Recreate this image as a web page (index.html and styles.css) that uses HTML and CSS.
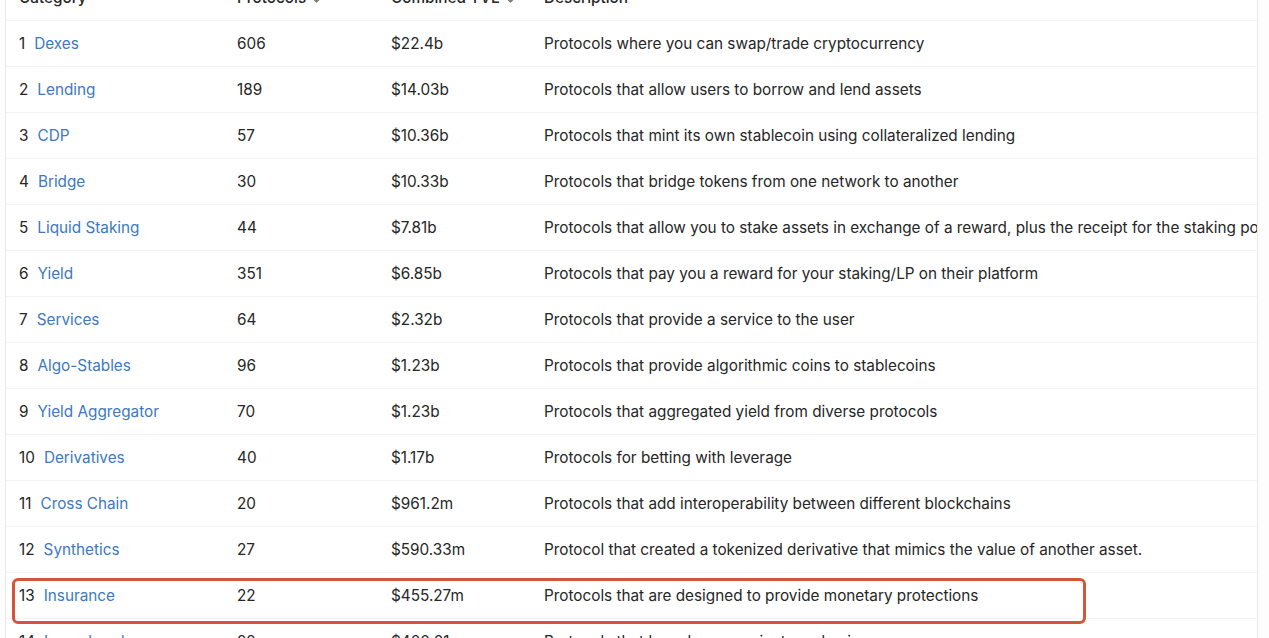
FILE: index.html
```html
<!DOCTYPE html>
<html lang="en">
<head>
<meta charset="utf-8">
<title>Categories</title>
<link rel="stylesheet" href="styles.css">
</head>
<body>
<div class="page">
  <div class="table">
    <div class="row head">
      <div class="cell">Category</div>
      <div class="cell">Protocols <svg class="arrow" viewBox="0 0 10 12" width="9" height="11"><path d="M5 1v9M1.5 6.5 5 10l3.5-3.5" fill="none" stroke="#777" stroke-width="1.4" stroke-linecap="round" stroke-linejoin="round"/></svg></div>
      <div class="cell">Combined TVL <svg class="arrow" viewBox="0 0 10 12" width="9" height="11"><path d="M5 1v9M1.5 6.5 5 10l3.5-3.5" fill="none" stroke="#777" stroke-width="1.4" stroke-linecap="round" stroke-linejoin="round"/></svg></div>
      <div class="cell">Description</div>
    </div>
    <div class="row"><div class="cell"><span class="num">1</span><a class="link">Dexes</a></div><div class="cell">606</div><div class="cell">$22.4b</div><div class="cell desc">Protocols where you can swap/trade cryptocurrency</div></div>
    <div class="row"><div class="cell"><span class="num">2</span><a class="link">Lending</a></div><div class="cell">189</div><div class="cell">$14.03b</div><div class="cell desc">Protocols that allow users to borrow and lend assets</div></div>
    <div class="row"><div class="cell"><span class="num">3</span><a class="link">CDP</a></div><div class="cell">57</div><div class="cell">$10.36b</div><div class="cell desc">Protocols that mint its own stablecoin using collateralized lending</div></div>
    <div class="row"><div class="cell"><span class="num">4</span><a class="link">Bridge</a></div><div class="cell">30</div><div class="cell">$10.33b</div><div class="cell desc">Protocols that bridge tokens from one network to another</div></div>
    <div class="row"><div class="cell"><span class="num">5</span><a class="link">Liquid Staking</a></div><div class="cell">44</div><div class="cell">$7.81b</div><div class="cell desc">Protocols that allow you to stake assets in exchange of a reward, plus the receipt for the staking position</div></div>
    <div class="row"><div class="cell"><span class="num">6</span><a class="link">Yield</a></div><div class="cell">351</div><div class="cell">$6.85b</div><div class="cell desc">Protocols that pay you a reward for your staking/LP on their platform</div></div>
    <div class="row"><div class="cell"><span class="num">7</span><a class="link">Services</a></div><div class="cell">64</div><div class="cell">$2.32b</div><div class="cell desc">Protocols that provide a service to the user</div></div>
    <div class="row"><div class="cell"><span class="num">8</span><a class="link">Algo-Stables</a></div><div class="cell">96</div><div class="cell">$1.23b</div><div class="cell desc">Protocols that provide algorithmic coins to stablecoins</div></div>
    <div class="row"><div class="cell"><span class="num">9</span><a class="link">Yield Aggregator</a></div><div class="cell">70</div><div class="cell">$1.23b</div><div class="cell desc">Protocols that aggregated yield from diverse protocols</div></div>
    <div class="row"><div class="cell"><span class="num">10</span><a class="link">Derivatives</a></div><div class="cell">40</div><div class="cell">$1.17b</div><div class="cell desc">Protocols for betting with leverage</div></div>
    <div class="row"><div class="cell"><span class="num">11</span><a class="link">Cross Chain</a></div><div class="cell">20</div><div class="cell">$961.2m</div><div class="cell desc">Protocols that add interoperability between different blockchains</div></div>
    <div class="row"><div class="cell"><span class="num">12</span><a class="link">Synthetics</a></div><div class="cell">27</div><div class="cell">$590.33m</div><div class="cell desc">Protocol that created a tokenized derivative that mimics the value of another asset.</div></div>
    <div class="row marked"><div class="cell"><span class="num">13</span><a class="link">Insurance</a></div><div class="cell">22</div><div class="cell">$455.27m</div><div class="cell desc">Protocols that are designed to provide monetary protections</div></div>
    <div class="row"><div class="cell"><span class="num">14</span><a class="link">Launchpad</a></div><div class="cell">22</div><div class="cell">$400.01m</div><div class="cell desc">Protocols that launch new projects and coins</div></div>
  </div>
</div>
</body>
</html>
```

FILE: styles.css
```css
* { box-sizing: border-box; }
html, body { margin: 0; padding: 0; background: #fdfdfd; }
body {
  font-family: Inter, "Noto Sans", "Liberation Sans", sans-serif;
  font-size: 15.3px;
  color: #262626;
  overflow: hidden;
  height: 638px;
}
.page {
  padding-left: 5px;
  width: 1258px;
}
.table {
  margin-top: -25px;
  background: #fff;
  border-left: 1px solid #e8e8e8;
  border-right: 1px solid #e8e8e8;
  overflow: hidden;
}
.row {
  display: grid;
  grid-template-columns: 218px 154px 153px 1fr;
  height: 46px;
  align-items: center;
  padding-left: 13px;
  border-bottom: 1px solid #f4f4f4;
  position: relative;
}
.row.head { font-weight: 500; }
.cell { white-space: nowrap; }
.num { display: inline-block; margin-right: 9px; }
.link { color: #3c79c0; text-decoration: none; }
.arrow { vertical-align: -1px; margin-left: 2px; }
.marked::after {
  content: "";
  position: absolute;
  left: 6px;
  top: 5px;
  width: 1068px;
  height: 40px;
  border: 3px solid #d6553a;
  border-radius: 6px;
}
```
